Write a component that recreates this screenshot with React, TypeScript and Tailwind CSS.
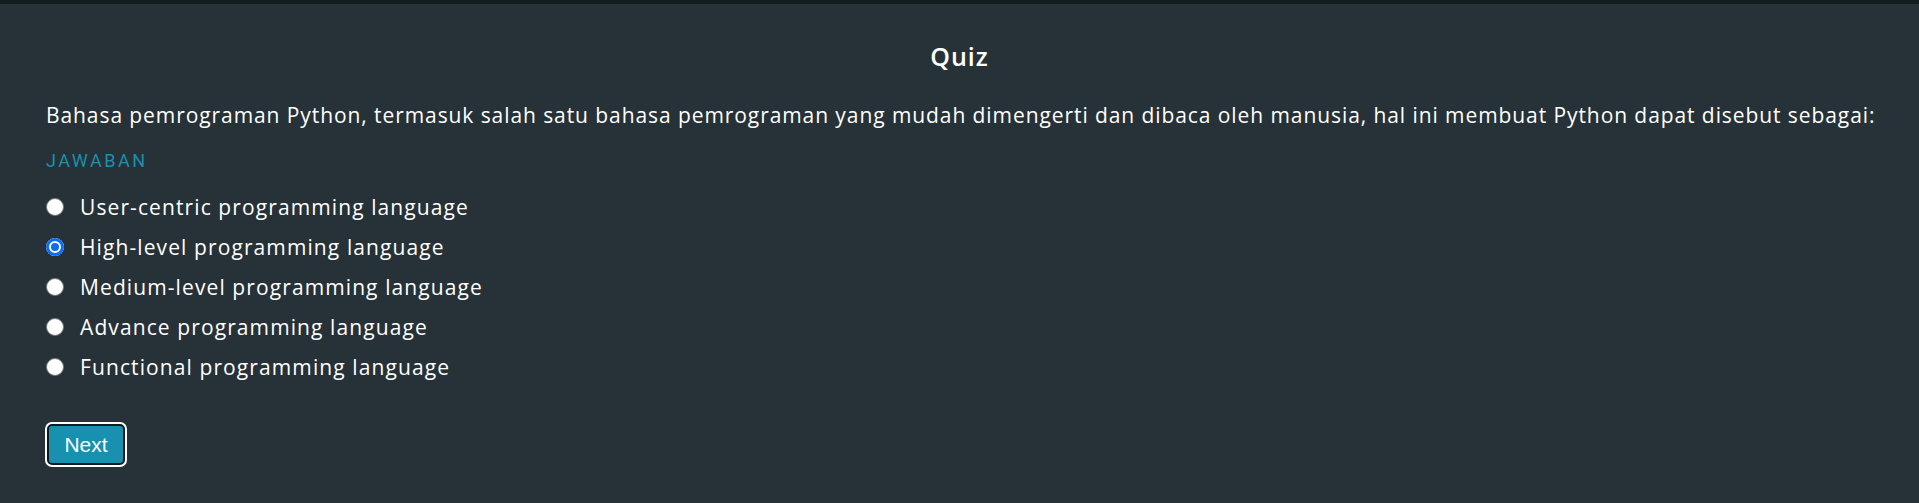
import { useState } from "react";

const options = [
  "User-centric programming language",
  "High-level programming language",
  "Medium-level programming language",
  "Advance programming language",
  "Functional programming language",
];

export default function App() {
  const [selected, setSelected] = useState(1);

  return (
    <div className="min-h-[503px] bg-[#263238] border-t-4 border-[#121d1f] text-white font-['Open_Sans',sans-serif]">
      <div className="pl-[46px] pr-[40px] pt-[34px]">
        <h1 className="text-center text-[25px] leading-[37px] font-semibold tracking-[1px] pr-[6px]">Quiz</h1>

        <p className="mt-[25px] text-[21px] leading-[30px] tracking-[0.92px] whitespace-nowrap">
          Bahasa pemrograman Python, termasuk salah satu bahasa pemrograman yang mudah dimengerti dan dibaca oleh
          manusia, hal ini membuat Python dapat disebut sebagai:
        </p>

        <div className="mt-[18px] text-[18px] leading-[26px] tracking-[2.5px] text-[#1a8fae] font-['Roboto',sans-serif]">
          JAWABAN
        </div>

        <div className="mt-[13px] flex flex-col">
          {options.map((o, i) => (
            <label key={o} className="flex items-center h-[40px] cursor-pointer">
              <input
                type="radio"
                name="answer"
                checked={selected === i}
                onChange={() => setSelected(i)}
                className="appearance-none w-[18px] h-[18px] rounded-full bg-white border border-[#767676] checked:border-0 checked:bg-[#0b6cf5] checked:shadow-[inset_0_0_0_3px_#0b6cf5,inset_0_0_0_5px_white] shrink-0"
              />
              <span className="ml-[16px] text-[21px] leading-[30px] tracking-[1.1px]">{o}</span>
            </label>
          ))}
        </div>

        <button className="mt-[37px] ml-[1px] w-[78px] h-[41px] rounded-[5px] border-2 border-[#111820] bg-[#1791af] outline-2 outline-white text-[21px] font-['Liberation_Sans',sans-serif] text-white">
          Next
        </button>
      </div>
    </div>
  );
}
